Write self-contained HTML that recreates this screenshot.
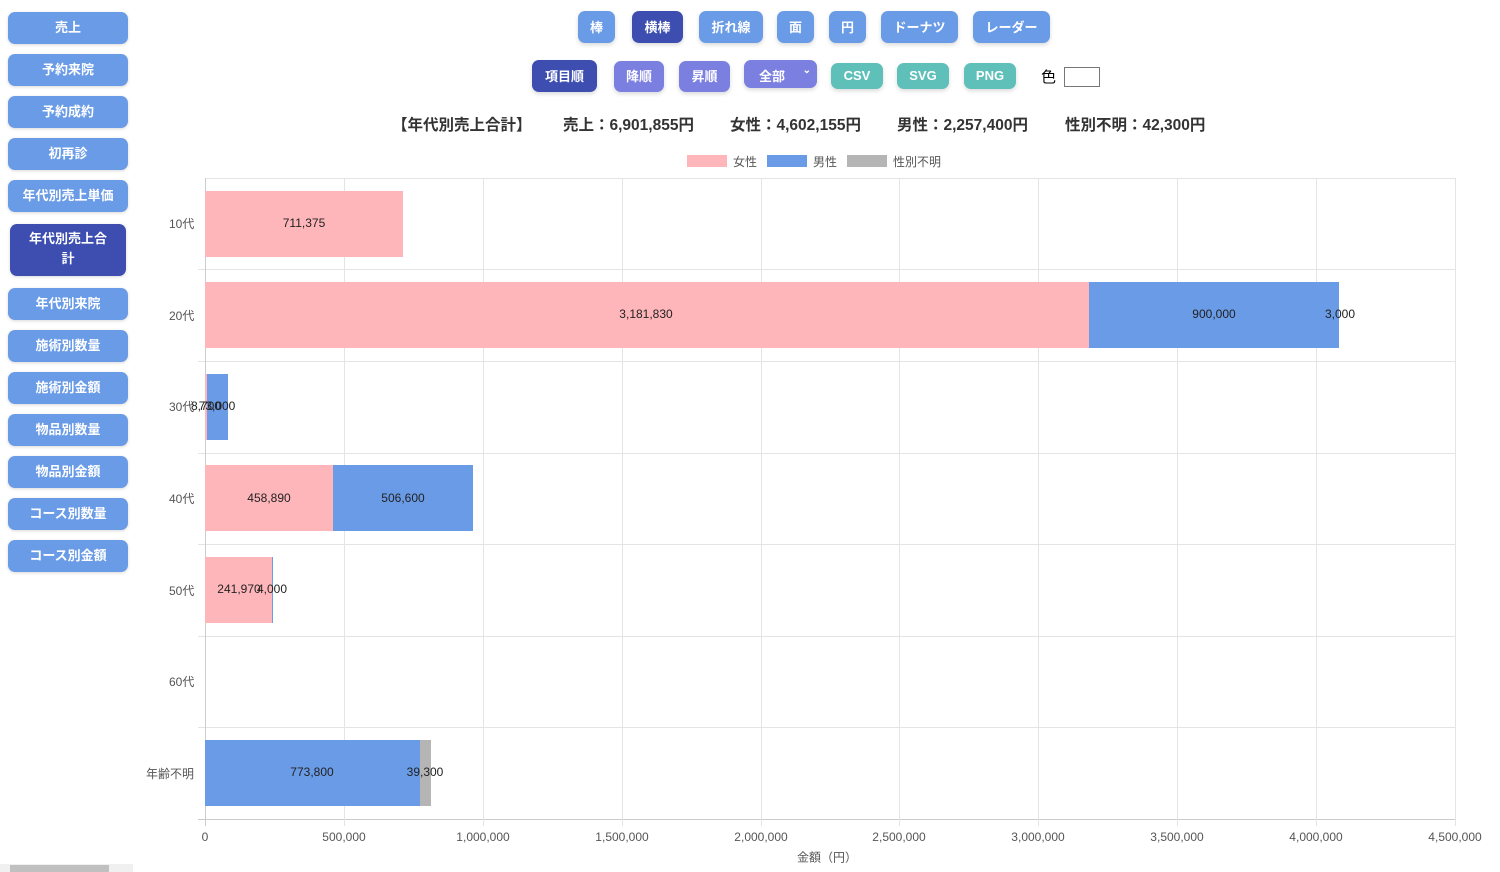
<!DOCTYPE html><html><head><meta charset="utf-8"><style>
*{margin:0;padding:0;box-sizing:border-box}
body{width:1500px;height:872px;background:#fff;font-family:"Liberation Sans","Noto Sans CJK JP",sans-serif;position:relative;overflow:hidden}
.a{position:absolute}
.sb{position:absolute;left:8px;width:120px;height:32px;background:#6a9be6;color:#fff;font-weight:bold;font-size:13px;border-radius:7px;display:flex;align-items:center;justify-content:center;text-align:center;box-shadow:0 1px 3px rgba(0,0,0,.15);padding-bottom:3px}
.b{position:absolute;color:#fff;font-weight:bold;font-size:13px;border-radius:7px;display:flex;align-items:center;justify-content:center;box-shadow:0 2px 4px rgba(0,0,0,.15);padding-bottom:2px}
.g{position:absolute;background:#e4e4e4}
.lbl{position:absolute;font-size:12px;color:#555}
.v{position:absolute;font-size:12px;color:#222;transform:translate(-50%,-50%)}
.t{position:absolute;top:113px;font-size:15.5px;font-weight:bold;color:#333;white-space:nowrap}
</style></head><body>
<div class="sb" style="top:12px">売上</div>
<div class="sb" style="top:54px">予約来院</div>
<div class="sb" style="top:96px">予約成約</div>
<div class="sb" style="top:138px">初再診</div>
<div class="sb" style="top:180px">年代別売上単価</div>
<div class="sb" style="top:224px;left:10px;width:116px;height:52px;background:#3d4eb0;line-height:20px">年代別売上合<br>計</div>
<div class="sb" style="top:288px">年代別来院</div>
<div class="sb" style="top:330px">施術別数量</div>
<div class="sb" style="top:372px">施術別金額</div>
<div class="sb" style="top:414px">物品別数量</div>
<div class="sb" style="top:456px">物品別金額</div>
<div class="sb" style="top:498px">コース別数量</div>
<div class="sb" style="top:540px">コース別金額</div>
<div class="a" style="left:0;top:864px;width:133px;height:8px;background:#f0f0f0"></div>
<div class="a" style="left:10px;top:865px;width:99px;height:7px;background:#c0c0c0"></div>

<div class="b" style="left:578px;top:11px;width:37px;height:32px;background:#6a9be6">棒</div>
<div class="b" style="left:632px;top:11px;width:51px;height:32px;background:#3d4eb0">横棒</div>
<div class="b" style="left:699px;top:11px;width:64px;height:32px;background:#6a9be6">折れ線</div>
<div class="b" style="left:777px;top:11px;width:37px;height:32px;background:#6a9be6">面</div>
<div class="b" style="left:829px;top:11px;width:37px;height:32px;background:#6a9be6">円</div>
<div class="b" style="left:881px;top:11px;width:77px;height:32px;background:#6a9be6">ドーナツ</div>
<div class="b" style="left:973px;top:11px;width:77px;height:32px;background:#6a9be6">レーダー</div>

<div class="b" style="left:532px;top:60px;width:65px;height:32px;background:#3d4eb0">項目順</div>
<div class="b" style="left:614px;top:61px;width:50px;height:31px;background:#7b7fe0">降順</div>
<div class="b" style="left:679px;top:61px;width:51px;height:31px;background:#7b7fe0">昇順</div>
<div class="b" style="left:744px;top:60px;width:73px;height:28px;background:#7b7fe0;justify-content:flex-start;padding-left:15px;padding-top:4px">全部<span style="position:absolute;right:6px;top:5px;font-size:10px">⌄</span></div>
<div class="b" style="left:831px;top:63px;width:52px;height:26px;background:#5fbfb9">CSV</div>
<div class="b" style="left:897px;top:63px;width:52px;height:26px;background:#5fbfb9">SVG</div>
<div class="b" style="left:964px;top:63px;width:52px;height:26px;background:#5fbfb9">PNG</div>
<div class="a" style="left:1041px;top:66px;font-size:15px">色</div>
<div class="a" style="left:1064px;top:67px;width:36px;height:20px;border:1px solid #777;background:#fff"></div>

<div class="t" style="left:392px">【年代別売上合計】</div>
<div class="t" style="left:563px">売上：6,901,855円</div>
<div class="t" style="left:730px">女性：4,602,155円</div>
<div class="t" style="left:897px">男性：2,257,400円</div>
<div class="t" style="left:1065px">性別不明：42,300円</div>

<div class="a" style="left:687px;top:155px;width:40px;height:12px;background:#ffb6ba"></div><div class="lbl" style="left:733px;top:153px">女性</div>
<div class="a" style="left:767px;top:155px;width:40px;height:12px;background:#6a9be6"></div><div class="lbl" style="left:813px;top:153px">男性</div>
<div class="a" style="left:847px;top:155px;width:40px;height:12px;background:#b5b5b5"></div><div class="lbl" style="left:893px;top:153px">性別不明</div>

<div class="g" style="left:205px;top:178px;width:1250px;height:1px"></div>
<div class="g" style="left:198px;top:269px;width:1257px;height:1px"></div>
<div class="g" style="left:198px;top:361px;width:1257px;height:1px"></div>
<div class="g" style="left:198px;top:453px;width:1257px;height:1px"></div>
<div class="g" style="left:198px;top:544px;width:1257px;height:1px"></div>
<div class="g" style="left:198px;top:636px;width:1257px;height:1px"></div>
<div class="g" style="left:198px;top:727px;width:1257px;height:1px"></div>
<div class="g" style="left:198px;top:819px;width:1257px;height:1px;background:#ccc"></div>
<div class="g" style="left:205px;top:178px;width:1px;height:648px;background:#ccc"></div>
<div class="g" style="left:344px;top:178px;width:1px;height:648px"></div>
<div class="g" style="left:483px;top:178px;width:1px;height:648px"></div>
<div class="g" style="left:622px;top:178px;width:1px;height:648px"></div>
<div class="g" style="left:761px;top:178px;width:1px;height:648px"></div>
<div class="g" style="left:899px;top:178px;width:1px;height:648px"></div>
<div class="g" style="left:1038px;top:178px;width:1px;height:648px"></div>
<div class="g" style="left:1177px;top:178px;width:1px;height:648px"></div>
<div class="g" style="left:1316px;top:178px;width:1px;height:648px"></div>
<div class="g" style="left:1455px;top:178px;width:1px;height:648px"></div>

<div class="a" style="left:205px;top:191px;width:198px;height:66px;background:#ffb6ba"></div>
<div class="a" style="left:205px;top:282px;width:884px;height:66px;background:#ffb6ba"></div>
<div class="a" style="left:1089px;top:282px;width:250px;height:66px;background:#6a9be6"></div>
<div class="a" style="left:205px;top:374px;width:2px;height:66px;background:#ffb6ba"></div>
<div class="a" style="left:207px;top:374px;width:21px;height:66px;background:#6a9be6"></div>
<div class="a" style="left:205px;top:465px;width:128px;height:66px;background:#ffb6ba"></div>
<div class="a" style="left:333px;top:465px;width:140px;height:66px;background:#6a9be6"></div>
<div class="a" style="left:205px;top:557px;width:67px;height:66px;background:#ffb6ba"></div>
<div class="a" style="left:272px;top:557px;width:1px;height:66px;background:#6a9be6"></div>
<div class="a" style="left:205px;top:740px;width:215px;height:66px;background:#6a9be6"></div>
<div class="a" style="left:420px;top:740px;width:11px;height:66px;background:#b5b5b5"></div>

<div class="v" style="left:304px;top:223px">711,375</div>
<div class="v" style="left:646px;top:314px">3,181,830</div>
<div class="v" style="left:1214px;top:314px">900,000</div>
<div class="v" style="left:1340px;top:314px">3,000</div>
<div class="v" style="left:206px;top:406px">8,700</div>
<div class="v" style="left:217px;top:406px">73,000</div>
<div class="v" style="left:269px;top:498px">458,890</div>
<div class="v" style="left:403px;top:498px">506,600</div>
<div class="v" style="left:239px;top:589px">241,970</div>
<div class="v" style="left:272px;top:589px">4,000</div>
<div class="v" style="left:312px;top:772px">773,800</div>
<div class="v" style="left:425px;top:772px">39,300</div>

<div class="lbl" style="left:169px;top:215px">10代</div>
<div class="lbl" style="left:169px;top:307px">20代</div>
<div class="lbl" style="left:169px;top:398px">30代</div>
<div class="lbl" style="left:169px;top:490px">40代</div>
<div class="lbl" style="left:169px;top:582px">50代</div>
<div class="lbl" style="left:169px;top:673px">60代</div>
<div class="lbl" style="left:146px;top:765px">年齢不明</div>

<div class="v" style="left:205px;top:837px;color:#555">0</div>
<div class="v" style="left:344px;top:837px;color:#555">500,000</div>
<div class="v" style="left:483px;top:837px;color:#555">1,000,000</div>
<div class="v" style="left:622px;top:837px;color:#555">1,500,000</div>
<div class="v" style="left:761px;top:837px;color:#555">2,000,000</div>
<div class="v" style="left:899px;top:837px;color:#555">2,500,000</div>
<div class="v" style="left:1038px;top:837px;color:#555">3,000,000</div>
<div class="v" style="left:1177px;top:837px;color:#555">3,500,000</div>
<div class="v" style="left:1316px;top:837px;color:#555">4,000,000</div>
<div class="v" style="left:1455px;top:837px;color:#555">4,500,000</div>
<div class="v" style="left:827px;top:857px;color:#555">金額（円）</div>
</body></html>
